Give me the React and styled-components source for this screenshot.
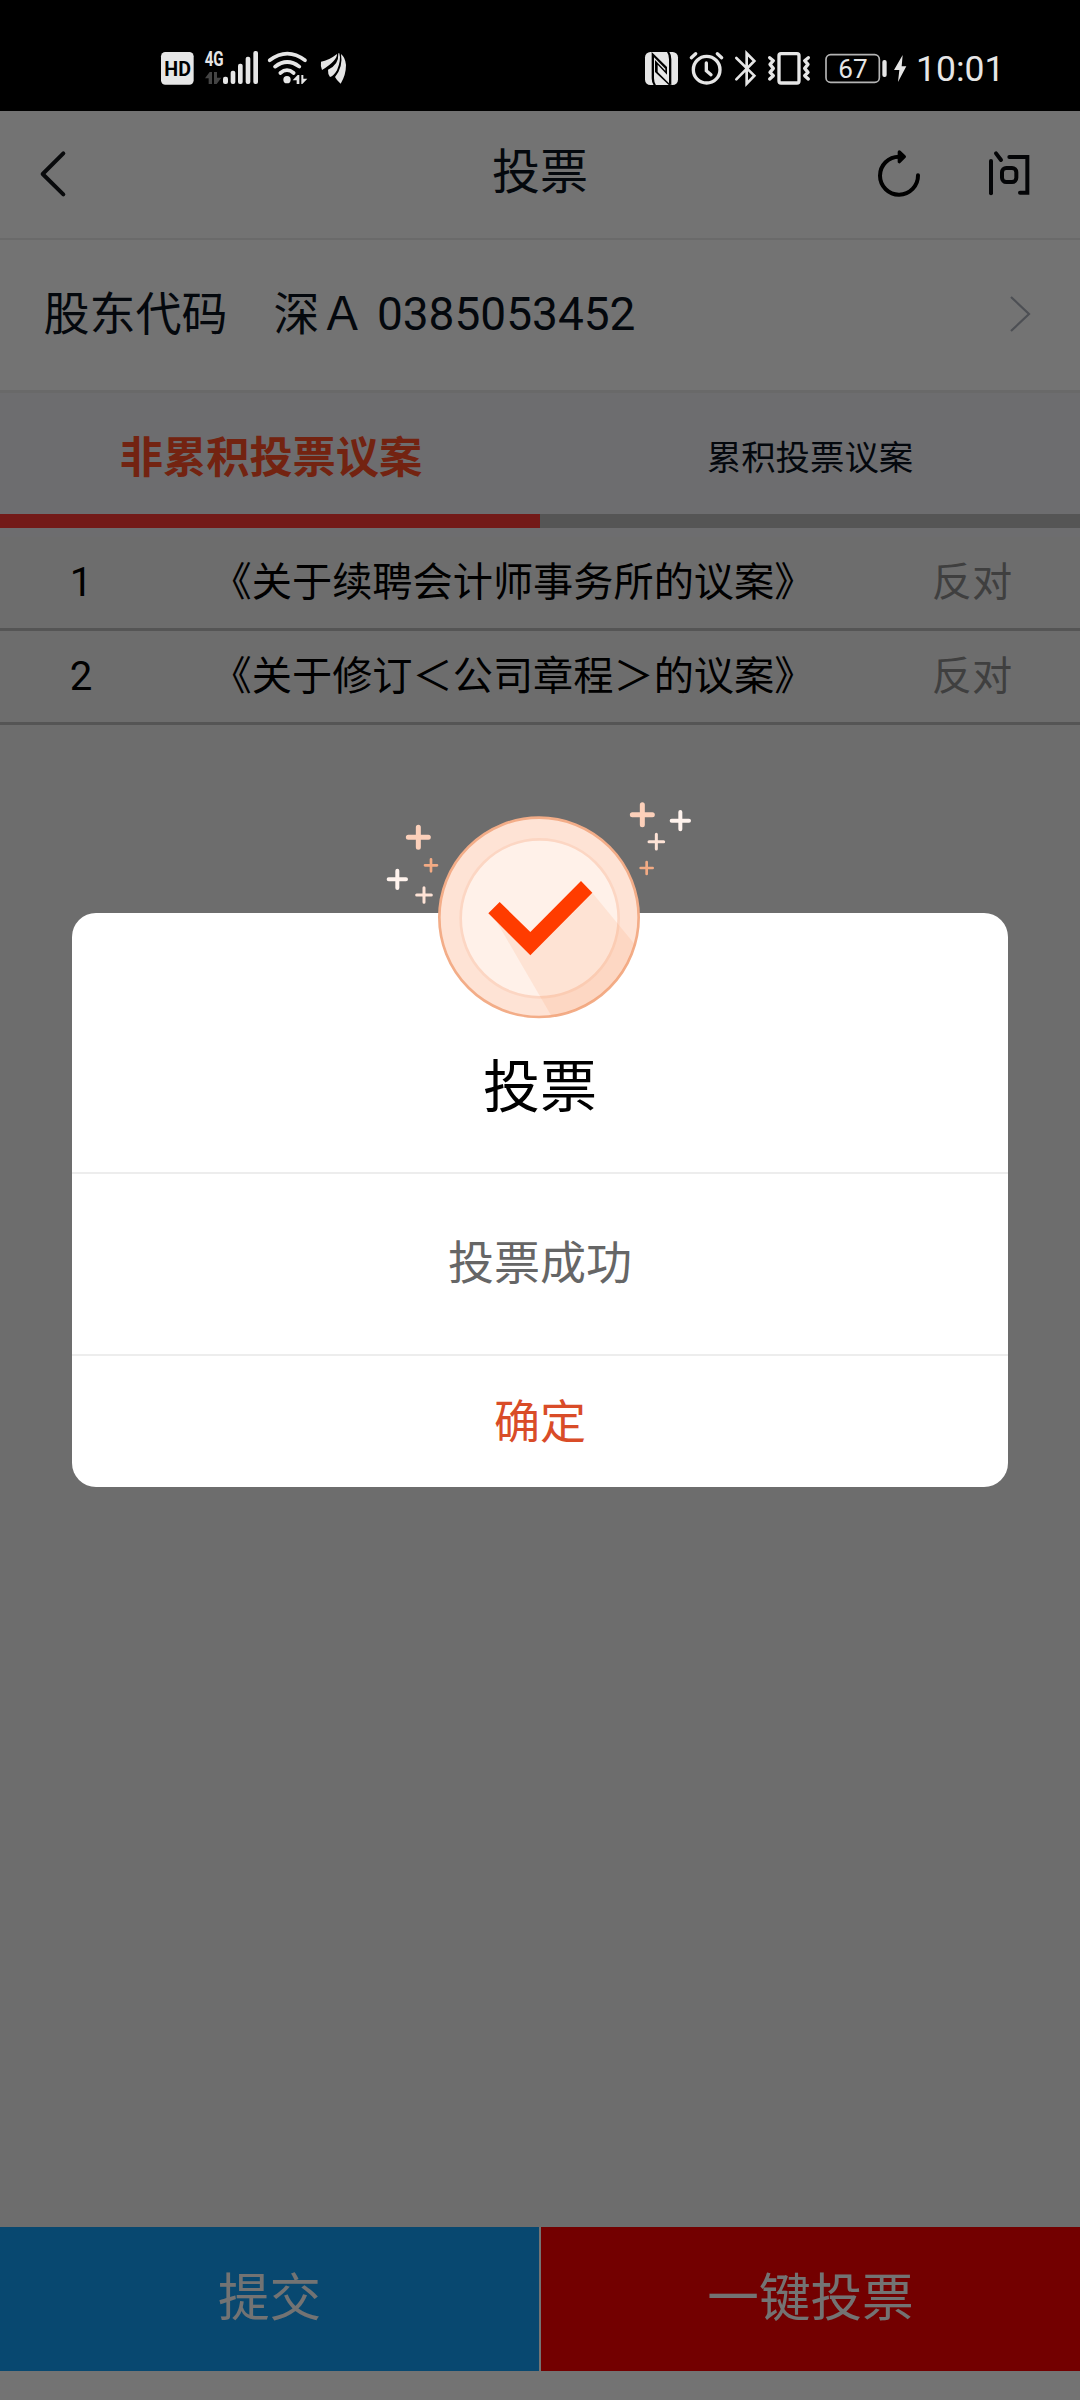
import React from 'react';
import styled, { createGlobalStyle } from 'styled-components';

const GlobalStyle = createGlobalStyle`
  * {
    box-sizing: border-box;
  }
  body {
    margin: 0;
    background: #f2f2f2;
    font-family: Roboto, 'Noto Sans CJK SC', sans-serif;
  }
`;

const Page = styled.div`
  position: relative;
  display: flex;
  flex-direction: column;
  width: 1080px;
  height: 2400px;
  overflow: hidden;
  background: #f2f2f2;
`;
const StatusBar = styled.div`
  position: relative;
  z-index: 2;
  display: flex;
  align-items: flex-start;
  flex: none;
  height: 111px;
  padding: 50px 0 0 161px;
  background: black;
`;
const StatusIcon = styled.svg`
  display: block;
  flex: none;
  height: 36px;
  width: ${({ width }) => width}px;
  margin-left: ${({ $gap }) => $gap || 0}px;
  overflow: visible;
`;
const Clock = styled.span`
  margin-left: 9px;
  font-size: 35.5px;
  line-height: 38px;
  color: #e6e6e6;
`;
const Header = styled.header`
  display: flex;
  align-items: center;
  flex: none;
  height: 129px;
  padding: 0 49px 0 39px;
  border-bottom: 2px solid #ebebeb;
  background: white;
`;
const HeaderSide = styled.div`
  display: flex;
  flex: 1;
  justify-content: ${({ $end }) => ($end ? 'flex-end' : 'flex-start')};
  gap: 66px;
  padding-bottom: 1px;
`;
const HeaderTitle = styled.h1`
  margin: 0 -10px 0 0;
  font-size: 48px;
  font-weight: 400;
  line-height: 72px;
  padding-bottom: 3px;
  color: #0b121d;
`;
const Account = styled.div`
  display: flex;
  align-items: center;
  justify-content: space-between;
  flex: none;
  height: 153px;
  padding: 0 49px 2px 43.5px;
  border-bottom: 3px solid #e8e8e8;
  background: white;
  font-size: 46px;
  line-height: 68px;
  white-space: pre;
  color: #0b121d;
`;
const Tabs = styled.div`
  display: flex;
  flex: none;
  height: 144px;
  padding-bottom: 9px;
  background: #f1f1f5;
`;
const Tab = styled.div`
  display: flex;
  width: 50%;
  align-items: center;
  justify-content: center;
  padding: ${({ $active }) => ($active ? '1px 0 0 2px' : '3px 0 0')};
  border-bottom: 14px solid ${({ $active }) => ($active ? '#ff3a35' : '#bdbdbd')};
  font-size: ${({ $active }) => ($active ? 43.2 : 34.4)}px;
  font-weight: ${({ $active }) => ($active ? 700 : 400)};
  color: ${({ $active }) => ($active ? '#ff4e26' : '#0b121d')};
`;
const Row = styled.div`
  display: flex;
  align-items: center;
  flex: none;
  height: 94px;
  border-bottom: 3px solid #bdbdbd;
  font-size: 40.2px;
  line-height: 60px;
  color: black;
`;
const RowNumber = styled.span`
  width: 162px;
  text-align: center;
`;
const RowTitle = styled.span`
  width: 702px;
  text-align: center;
  white-space: nowrap;
`;
const RowVote = styled.span`
  width: 216px;
  text-align: center;
  color: #8c8c8c;
`;
const Actions = styled.div`
  display: flex;
  flex: none;
  gap: 2px;
  margin-top: auto;
  padding-bottom: 29px;
  background: white;
`;
const ActionButton = styled.button`
  flex: 1;
  height: 144px;
  padding: 0 0 11px;
  border: none;
  background: ${({ $color }) => $color};
  font-family: inherit;
  font-size: 51.6px;
  color: white;
`;
const Overlay = styled.div`
  position: absolute;
  inset: 0;
  z-index: 1;
  display: flex;
  align-items: center;
  justify-content: center;
  background: rgba(0, 0, 0, 0.55);
`;
const Dialog = styled.div`
  position: relative;
  display: flex;
  flex-direction: column;
  width: 936px;
  height: 574px;
  border-radius: 24px;
  background: white;
`;
const Medal = styled.svg`
  position: absolute;
  top: -133px;
  left: 298px;
`;
const DialogTitle = styled.h2`
  height: 261px;
  margin: 0;
  padding-top: 133px;
  border-bottom: 2px solid #ededed;
  font-size: 57px;
  font-weight: 400;
  line-height: 84px;
  text-align: center;
  color: black;
`;
const DialogText = styled.p`
  height: 182px;
  margin: 0;
  padding-top: 55px;
  border-bottom: 2px solid #ededed;
  font-size: 46px;
  line-height: 68px;
  text-align: center;
  color: #666;
`;
const DialogButton = styled.button`
  flex: 1;
  padding: 0 0 8px;
  border: none;
  background: none;
  font-family: inherit;
  font-size: 46px;
  color: #d94c28;
`;

const proposals = [
  { id: 1, title: '《关于续聘会计师事务所的议案》', vote: '反对' },
  { id: 2, title: '《关于修订＜公司章程＞的议案》', vote: '反对' }
];

const sparks = [
  { x: 145, y: 172, r: 30, w: 15, color: '#fcd0ba' },
  { x: 183, y: 256, r: 18, w: 8, color: '#f3ab84' },
  { x: 82, y: 298, r: 26, w: 12, color: '#fff3ed' },
  { x: 162, y: 345, r: 22, w: 9, color: '#fee3d6' },
  { x: 817, y: 104, r: 30, w: 15, color: '#fcd0ba' },
  { x: 931, y: 122, r: 26, w: 12, color: '#fff3ed' },
  { x: 859, y: 185, r: 22, w: 9, color: '#fee3d6' },
  { x: 830, y: 264, r: 18, w: 8, color: '#f3ab84' }
];

function StatusIcons() {
  return (
    <>
      <StatusIcon width={33} viewBox="63 60 99 108" fill="#e6e6e6">
        <rect x="63" y="66" width="98" height="98" rx="13" />
        <text
          x="73"
          y="137"
          fontSize="63"
          fontWeight="700"
          textLength="80"
          lengthAdjust="spacingAndGlyphs"
          fill="black"
        >
          HD
        </text>
      </StatusIcon>
      <StatusIcon width={54} $gap={11} viewBox="195 60 162 108" fill="#e6e6e6">
        <text
          x="194"
          y="107"
          fontSize="60"
          fontWeight="700"
          textLength="57"
          lengthAdjust="spacingAndGlyphs"
        >
          4G
        </text>
        <path d="M195 145 L209 126 H216 V162 H206 V145 Z" fill="#444" />
        <path d="M222 126 H231 V143 H244 L230 162 H222 Z" fill="#444" />
        <rect x="249" y="140" width="15" height="22" rx="6" />
        <rect x="272" y="122" width="14" height="40" rx="6" />
        <rect x="294" y="101" width="14" height="61" rx="6" />
        <rect x="317" y="80" width="14" height="82" rx="6" />
        <rect x="340" y="63" width="14" height="99" rx="6" />
      </StatusIcon>
      <StatusIcon width={41} $gap={8} viewBox="381 60 123 108" fill="#e6e6e6">
        <g fill="none" stroke="#e6e6e6" strokeWidth="11" strokeLinecap="round">
          <path d="M389 91 Q442 51 495 91" />
          <path d="M405 110 Q442 82 478 110" />
          <path d="M421 129 Q441 112 461 129" />
        </g>
        <circle cx="441" cy="149" r="11" />
        <path d="M458 151 L473 135 H478 V162 H470 V151 Z" />
        <path d="M484 135 H490 V146 H502 L487 162 H484 Z" />
      </StatusIcon>
      <StatusIcon width={27} $gap={12} viewBox="540 60 81 108" fill="#e6e6e6">
        <path d="M543 95 Q566 92 591 72 Q592 92 546 120 Q541 108 543 95 Z" />
        <path d="M598 70 Q604 90 591 121 Q581 138 570 141 Q563 131 564 119 Q597 105 595 70 Z" />
        <path d="M603 72 Q616 82 618 105 Q618 135 602 161 Q590 151 585 141 Q610 110 603 72 Z" />
      </StatusIcon>
      <StatusIcon width={33} $gap={298} viewBox="75 60 99 108">
        <rect x="75" y="66" width="99" height="99" rx="16" fill="#e6e6e6" />
        <path d="M95 66 L141 111 V134 L113 104 V126 L153 166 H147 L105 126 V90 L136 122 V116 L102 82 V145 Q102 158 108 166 H101 Q95 158 95 145 Z" />
        <path d="M141 66 Q147 74 147 88 V161 L154 166 V88 Q154 74 148 66 Z" />
      </StatusIcon>
      <StatusIcon width={35} $gap={11} viewBox="207 60 105 108">
        <g fill="none" stroke="#e6e6e6" strokeWidth="10" strokeLinecap="round">
          <circle cx="260" cy="119" r="40" />
          <path d="M259 99 V122 L273 134" />
          <path d="M214 83 L227 71" />
          <path d="M292 71 L305 83" />
        </g>
      </StatusIcon>
      <StatusIcon width={23} $gap={10} viewBox="342 60 69 108">
        <path
          d="M349 84 L403 137 L380 161 V70 L403 93 L349 148"
          fill="none"
          stroke="#e6e6e6"
          strokeWidth="8"
          strokeLinecap="round"
        />
      </StatusIcon>
      <StatusIcon width={44} $gap={10} viewBox="441 60 132 108">
        <g fill="none" stroke="#e6e6e6" strokeWidth="10" strokeLinecap="round" strokeLinejoin="round">
          <rect x="477" y="71" width="60" height="88" rx="6" />
          <path d="M449 83 L460 92 L450 103 L460 115 L450 127 L460 137 L449 147" />
          <path d="M565 83 L554 92 L564 103 L554 115 L564 127 L554 137 L565 147" />
        </g>
      </StatusIcon>
      <StatusIcon width={62} $gap={14} viewBox="615 60 186 108" fill="#e6e6e6">
        <rect x="618" y="74" width="160" height="83" rx="14" fill="none" stroke="#b4b4b4" strokeWidth="5" />
        <rect x="787" y="90" width="13" height="51" rx="6" />
        <text x="655" y="143" fontSize="80" textLength="88" lengthAdjust="spacingAndGlyphs">
          67
        </text>
      </StatusIcon>
      <StatusIcon width={14} $gap={6} viewBox="819 60 42 108" fill="#e6e6e6">
        <path d="M848 75 L822 120 H838 L834 156 L859 109 H845 Z" />
      </StatusIcon>
    </>
  );
}

function SuccessMedal() {
  return (
    <Medal width="340" height="250" viewBox="0 0 1020 750">
      <clipPath id="coin">
        <circle cx="507" cy="412" r="298" />
      </clipPath>
      <circle cx="507" cy="412" r="299" fill="#fee3d5" stroke="#f3ad88" strokeWidth="8" />
      <circle cx="509" cy="415" r="237" fill="#fff1e9" stroke="#fcd6c3" strokeWidth="8" />
      <path
        d="M374 415 L560 735 L900 735 V622 L660 330 L481 505 Z"
        fill="#fa8c50"
        fillOpacity="0.13"
        clipPath="url(#coin)"
      />
      <path d="M355 400 L389 366 L481 456 L633 303 L667 338 L481 526 Z" fill="#ff3c00" />
      {sparks.map(({ x, y, r, w, color }) => (
        <path
          key={`${x}-${y}`}
          d={`M${x - r} ${y} H${x + r} M${x} ${y - r} V${y + r}`}
          stroke={color}
          strokeWidth={w}
          strokeLinecap="round"
        />
      ))}
    </Medal>
  );
}

export default function App() {
  return (
    <Page>
      <GlobalStyle />
      <StatusBar>
        <StatusIcons />
        <Clock>10:01</Clock>
      </StatusBar>
      <Header>
        <HeaderSide>
          <svg width="28" height="48" viewBox="117 120 84 144">
            <path
              d="M190 130 L128 192 L190 253"
              fill="none"
              stroke="#14181c"
              strokeWidth="12"
              strokeLinecap="round"
              strokeLinejoin="round"
            />
          </svg>
        </HeaderSide>
        <HeaderTitle>投票</HeaderTitle>
        <HeaderSide $end>
          <svg width="44" height="48" viewBox="111 120 132 144">
            <path
              d="M234 196 A57 57 0 1 1 177 140"
              fill="none"
              stroke="black"
              strokeWidth="12"
              strokeLinecap="round"
            />
            <path
              d="M178 126 L193 140 L178 155 Z"
              stroke="black"
              strokeWidth="10"
              strokeLinejoin="round"
            />
          </svg>
          <svg width="44" height="48" viewBox="438 120 132 144">
            <g fill="none" stroke="#0b0d10" strokeWidth="12" strokeLinecap="round">
              <path d="M450 153 V250" />
              <path d="M465 130 L480 150" />
              <path d="M505 141 H559 V248 H537" />
              <rect x="483" y="174" width="43" height="42" rx="13" />
            </g>
          </svg>
        </HeaderSide>
      </Header>
      <Account>
        <span>{'股东代码\u3000深Ａ 0385053452'}</span>
        <svg width="22" height="38" viewBox="0 0 22 38">
          <path d="M2 2 L20 19 L2 36" fill="none" stroke="#aab0ba" strokeWidth="2.2" />
        </svg>
      </Account>
      <Tabs>
        <Tab $active>非累积投票议案</Tab>
        <Tab>累积投票议案</Tab>
      </Tabs>
      {proposals.map(({ id, title, vote }) => (
        <Row key={id}>
          <RowNumber>{id}</RowNumber>
          <RowTitle>{title}</RowTitle>
          <RowVote>{vote}</RowVote>
        </Row>
      ))}
      <Actions>
        <ActionButton $color="#12a0f9">提交</ActionButton>
        <ActionButton $color="#ff0000">一键投票</ActionButton>
      </Actions>
      <Overlay>
        <Dialog>
          <SuccessMedal />
          <DialogTitle>投票</DialogTitle>
          <DialogText>投票成功</DialogText>
          <DialogButton>确定</DialogButton>
        </Dialog>
      </Overlay>
    </Page>
  );
}
